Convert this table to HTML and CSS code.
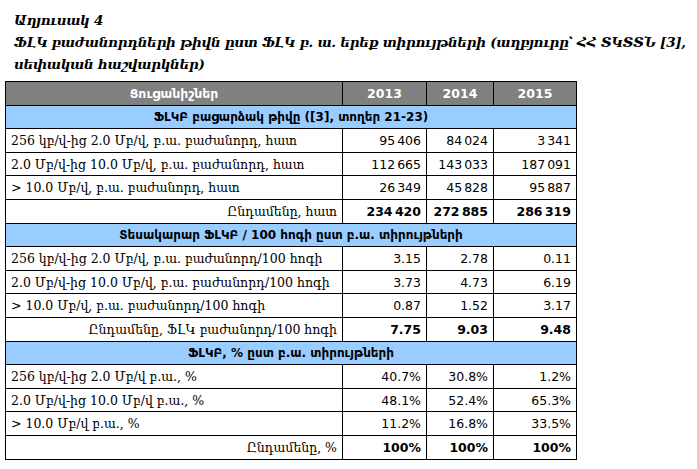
FILE: index.html
```html
<!DOCTYPE html>
<html lang="hy">
<head>
<meta charset="utf-8">
<link rel="stylesheet" href="styles.css">
</head>
<body>
<div class="caption">
  <p class="cap-line">Աղյուսակ 4</p>
  <p class="cap-line">ՖԼԿ բաժանորդների թիվն ըստ ՖԼԿ բ. ա. երեք տիրույթների (աղբյուրը՝ ՀՀ ՏԿՏՏՆ [3],</p>
  <p class="cap-line">սեփական հաշվարկներ)</p>
</div>
<table class="data">
  <colgroup>
    <col class="c-label"><col class="c-y1"><col class="c-y2"><col class="c-y3">
  </colgroup>
  <tr class="head">
    <th>Ցուցանիշներ</th><th class="yr">2013</th><th class="yr">2014</th><th class="yr">2015</th>
  </tr>
  <tr class="section"><td colspan="4">ՖԼԿԲ բացարձակ թիվը ([3], տողեր 21-23)</td></tr>
  <tr><td class="lbl">256 կբ/վ-ից 2.0 Մբ/վ, բ.ա. բաժանորդ,  հատ</td><td class="num">95 406</td><td class="num">84 024</td><td class="num">3 341</td></tr>
  <tr><td class="lbl">2.0 Մբ/վ-ից 10.0 Մբ/վ, բ.ա. բաժանորդ,  հատ</td><td class="num">112 665</td><td class="num">143 033</td><td class="num">187 091</td></tr>
  <tr><td class="lbl">&gt; 10.0 Մբ/վ, բ.ա. բաժանորդ,  հատ</td><td class="num">26 349</td><td class="num">45 828</td><td class="num">95 887</td></tr>
  <tr class="total"><td class="lbl">Ընդամենը, հատ</td><td class="num">234 420</td><td class="num">272 885</td><td class="num">286 319</td></tr>
  <tr class="section"><td colspan="4">Տեսակարար ՖԼԿԲ / 100 հոգի ըստ բ.ա. տիրույթների</td></tr>
  <tr><td class="lbl">256 կբ/վ-ից 2.0 Մբ/վ, բ.ա. բաժանորդ/100 հոգի</td><td class="num">3.15</td><td class="num">2.78</td><td class="num">0.11</td></tr>
  <tr><td class="lbl">2.0 Մբ/վ-ից 10.0 Մբ/վ, բ.ա. բաժանորդ/100 հոգի</td><td class="num">3.73</td><td class="num">4.73</td><td class="num">6.19</td></tr>
  <tr><td class="lbl">&gt; 10.0 Մբ/վ, բ.ա. բաժանորդ/100  հոգի</td><td class="num">0.87</td><td class="num">1.52</td><td class="num">3.17</td></tr>
  <tr class="total"><td class="lbl">Ընդամենը, ՖԼԿ բաժանորդ/100 հոգի</td><td class="num">7.75</td><td class="num">9.03</td><td class="num">9.48</td></tr>
  <tr class="section"><td colspan="4">ՖԼԿԲ, % ըստ բ.ա. տիրույթների</td></tr>
  <tr><td class="lbl">256 կբ/վ-ից 2.0 Մբ/վ բ.ա., %</td><td class="num">40.7%</td><td class="num">30.8%</td><td class="num">1.2%</td></tr>
  <tr><td class="lbl">2.0 Մբ/վ-ից 10.0 Մբ/վ բ.ա., %</td><td class="num">48.1%</td><td class="num">52.4%</td><td class="num">65.3%</td></tr>
  <tr><td class="lbl">&gt; 10.0 Մբ/վ բ.ա., %</td><td class="num">11.2%</td><td class="num">16.8%</td><td class="num">33.5%</td></tr>
  <tr class="total"><td class="lbl">Ընդամենը, %</td><td class="num">100%</td><td class="num">100%</td><td class="num">100%</td></tr>
</table>
</body>
</html>
```
FILE: styles.css
```css
html, body {
  margin: 0;
  padding: 0;
  background: #ffffff;
}

.caption {
  padding: 9px 0 0 14px;
  font-family: "DejaVu Serif", "Liberation Serif", serif;
  font-style: italic;
  font-weight: bold;
  font-size: 13.5px;
  letter-spacing: -0.3px;
  line-height: 22px;
  color: #000;
  white-space: nowrap;
}

.cap-line {
  margin: 0;
}

.data {
  margin: 6px 0 0 5px;
  border-collapse: collapse;
  table-layout: fixed;
  width: 571px;
  font-family: "DejaVu Sans", "Liberation Sans", sans-serif;
  font-size: 12.5px;
  color: #000;
}

.c-label { width: 337px; }
.c-y1 { width: 84px; }
.c-y2 { width: 67px; }
.c-y3 { width: 83px; }

.data th,
.data td {
  border: 1px solid #000;
  height: 22.6px;
  padding: 0 5px;
  white-space: nowrap;
  overflow: hidden;
}

.head th {
  background: #808080;
  color: #ffffff;
  font-weight: bold;
  text-align: center;
  font-size: 12.5px;
}

.section td {
  background: #99ccff;
  text-align: center;
  font-weight: bold;
  font-size: 12px;
}

.lbl {
  font-family: "DejaVu Serif", "Liberation Serif", serif;
  font-size: 12.5px;
  text-align: left;
}

.total .lbl {
  text-align: right;
}

.num {
  text-align: right;
  word-spacing: -2px;
}

.total .num {
  font-weight: bold;
}
```
